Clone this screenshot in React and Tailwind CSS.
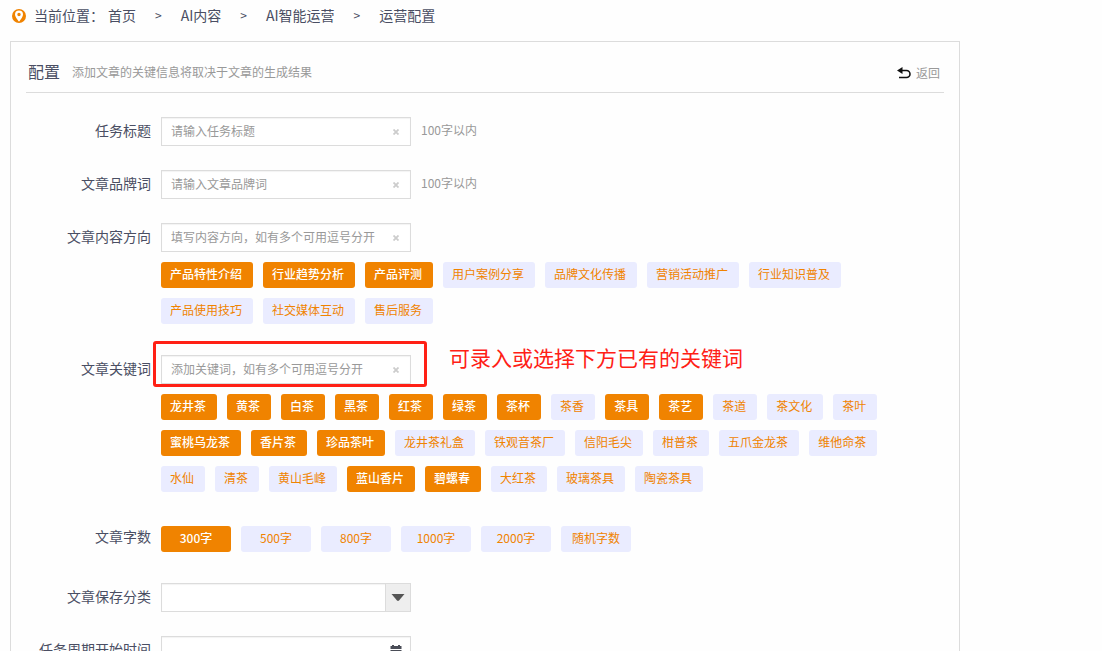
import React, { useState } from "react";
import clsx from "clsx";

const DIRECTIONS = [
  "产品特性介绍",
  "行业趋势分析",
  "产品评测",
  "用户案例分享",
  "品牌文化传播",
  "营销活动推广",
  "行业知识普及",
  "产品使用技巧",
  "社交媒体互动",
  "售后服务",
];

const KEYWORDS = [
  "龙井茶", "黄茶", "白茶", "黑茶", "红茶", "绿茶", "茶杯", "茶香", "茶具", "茶艺", "茶道", "茶文化", "茶叶",
  "蜜桃乌龙茶", "香片茶", "珍品茶叶", "龙井茶礼盒", "铁观音茶厂", "信阳毛尖", "柑普茶", "五爪金龙茶", "维他命茶",
  "水仙", "清茶", "黄山毛峰", "蓝山香片", "碧螺春", "大红茶", "玻璃茶具", "陶瓷茶具",
];

const WORD_COUNTS = ["300字", "500字", "800字", "1000字", "2000字", "随机字数"];

function PinIcon() {
  return (
    <svg width="14" height="14" viewBox="0 0 14 14" aria-hidden="true">
      <circle cx="7" cy="7" r="7" fill="#f08300" />
      <path
        fill="#fff"
        fillRule="evenodd"
        d="M7 1.500a4 4 0 0 0-4 4C3 8.300 7 12.600 7 12.600S11 8.300 11 5.500a4 4 0 0 0-4-4Zm0 2.300a1.700 1.700 0 1 1 0 3.400 1.700 1.700 0 0 1 0-3.400Z"
      />
    </svg>
  );
}

function BackIcon() {
  return (
    <svg width="14" height="12" viewBox="0 0 14 12" aria-hidden="true">
      <path d="M0 3.500 5.500 0v7Z" fill="#111" />
      <path d="M4 3.500h5.500a3.500 3.500 0 0 1 0 7H2" fill="none" stroke="#111" strokeWidth="1.600" />
    </svg>
  );
}

function CalendarIcon() {
  return (
    <svg width="12" height="13" viewBox="0 0 12 13" fill="#4a4d57" aria-hidden="true">
      <path d="M2 0h2v1h4V0h2v1h1.500v3H.5V1H2Z" />
      <path d="M.5 5h11v8H.5Z" />
    </svg>
  );
}

function Row({ id, label, className, children }) {
  return (
    <div className={clsx("flex gap-2.5", className)}>
      <label htmlFor={id} className="w-[125px] shrink-0 text-right text-sm leading-[26px]">
        {label}
      </label>
      <div className="min-w-0 flex-1">{children}</div>
    </div>
  );
}

function TextField({ id, placeholder, hint }) {
  const [value, setValue] = useState("");
  return (
    <div className="flex gap-2.5">
      <div className="relative w-[250px]">
        <input
          id={id}
          value={value}
          onChange={(e) => setValue(e.target.value)}
          placeholder={placeholder}
          className="block h-[29px] w-full border border-[#dcdcdc] bg-white pr-7 pb-0.5 pl-[9px] text-xs shadow-[inset_0_1px_1px_#0000000d] outline-none placeholder:text-[#999]"
        />
        <button
          type="button"
          aria-label="清空"
          onClick={() => setValue("")}
          className="absolute inset-y-0 right-3 flex items-center"
        >
          <svg width="6" height="6" viewBox="0 0 6 6" stroke="#ccc" strokeWidth="1.800">
            <path d="M.5.5l5 5M5.500.5l-5 5" />
          </svg>
        </button>
      </div>
      {hint && <span className="text-xs leading-[26px] text-[#999]">{hint}</span>}
    </div>
  );
}

function Chip({ active, fixed, onClick, children }) {
  return (
    <button
      type="button"
      aria-pressed={active}
      onClick={onClick}
      className={clsx(
        "h-[26px] rounded-[3px] pb-0.5 text-xs",
        fixed ? "w-[70px]" : "pr-[11px] pl-[9px]",
        active ? "bg-[#f08300] font-medium text-white" : "bg-[#eaecff] text-[#f08300]"
      )}
    >
      {children}
    </button>
  );
}

function ChipGroup({ items, initial, className }) {
  const [selected, setSelected] = useState(initial);
  const toggle = (item) =>
    setSelected((prev) =>
      prev.includes(item) ? prev.filter((i) => i !== item) : [...prev, item]
    );

  return (
    <div className={clsx("flex max-w-[740px] flex-wrap gap-2.5", className)}>
      {items.map((item) => (
        <Chip key={item} active={selected.includes(item)} onClick={() => toggle(item)}>
          {item}
        </Chip>
      ))}
    </div>
  );
}

export default function App() {
  const [count, setCount] = useState("300字");

  return (
    <div className="min-h-screen bg-[#fefefe] px-2.5 font-['Noto_Sans_CJK_SC',sans-serif] text-[#4a4e63]">
      {/* Breadcrumb */}
      <nav className="flex h-8 items-center pl-0.5 text-sm">
        <PinIcon />
        <div className="ml-2 flex items-center pb-0.5">
          <span className="mr-1">当前位置：</span>
          <div className="flex items-center gap-[19px]">
            <a href="#home">首页</a>
            <span className="text-xs">&gt;</span>
            <a href="#ai">AI内容</a>
            <span className="text-xs">&gt;</span>
            <a href="#operate">AI智能运营</a>
            <span className="text-xs">&gt;</span>
            <span>运营配置</span>
          </div>
        </div>
      </nav>

      {/* Panel */}
      <main className="mt-[9px] max-w-[950px] border border-[#dcdcdc] px-[15px] pb-6">
        <header className="flex h-[51px] items-center border-b border-[#dcdcdc] px-0.5 pt-2.5">
          <h1 className="pb-0.5 text-base">配置</h1>
          <p className="ml-3 text-xs text-[#999]">添加文章的关键信息将取决于文章的生成结果</p>
          <a href="#back" className="ml-auto flex items-center gap-[5px] pt-0.5 pr-0.5 text-xs text-[#999]">
            <BackIcon />
            返回
          </a>
        </header>

        <form className="flex flex-col gap-6 pt-6">
          <Row id="title" label="任务标题">
            <TextField id="title" placeholder="请输入任务标题" hint="100字以内" />
          </Row>

          <Row id="brand" label="文章品牌词">
            <TextField id="brand" placeholder="请输入文章品牌词" hint="100字以内" />
          </Row>

          <Row id="direction" label="文章内容方向" className="pb-[7px]">
            <TextField id="direction" placeholder="填写内容方向，如有多个可用逗号分开" />
            <ChipGroup
              className="mt-2.5"
              items={DIRECTIONS}
              initial={["产品特性介绍", "行业趋势分析", "产品评测"]}
            />
          </Row>

          <Row id="keyword" label="文章关键词" className="pb-[7px]">
            <div className="relative">
              <TextField id="keyword" placeholder="添加关键词，如有多个可用逗号分开" />
              {/* Callout */}
              <div className="pointer-events-none absolute -top-3.5 -left-2 h-[46px] w-[274px] rounded-[3px] border-3 border-[#ff2015]" />
              <p className="absolute -top-3.5 left-72 text-[21px] leading-8 text-[#ff2015]">
                可录入或选择下方已有的关键词
              </p>
            </div>
            <ChipGroup
              className="mt-2.5"
              items={KEYWORDS}
              initial={[
                "龙井茶", "黄茶", "白茶", "黑茶", "红茶", "绿茶", "茶杯", "茶具", "茶艺",
                "蜜桃乌龙茶", "香片茶", "珍品茶叶", "蓝山香片", "碧螺春",
              ]}
            />
          </Row>

          <Row label="文章字数" className="pb-[7px]">
            <div className="flex flex-wrap gap-2.5 pt-[3px]">
              {WORD_COUNTS.map((item) => (
                <Chip key={item} fixed active={item === count} onClick={() => setCount(item)}>
                  {item}
                </Chip>
              ))}
            </div>
          </Row>

          <Row id="category" label="文章保存分类">
            <div className="relative w-[250px]">
              <select
                id="category"
                className="block h-[29px] w-full appearance-none border border-[#dcdcdc] bg-white pr-8 pl-[9px] text-xs shadow-[inset_0_1px_1px_#0000000d] outline-none"
              >
                <option value=""></option>
              </select>
              <span className="pointer-events-none absolute inset-y-0 right-0 flex w-[26px] items-center justify-center border border-[#dcdcdc] bg-[#eee]">
                <svg width="14" height="7" viewBox="0 0 14 7" fill="#555" aria-hidden="true">
                  <path d="M.5 0h13L8 6.500q-1 .8-2 0Z" />
                </svg>
              </span>
            </div>
          </Row>

          <Row id="start" label="任务周期开始时间">
            <div className="relative w-[250px]">
              <input
                id="start"
                type="text"
                className="block h-[29px] w-full border border-[#dcdcdc] bg-white pr-8 pl-[9px] text-xs shadow-[inset_0_1px_1px_#0000000d] outline-none"
              />
              <span className="pointer-events-none absolute inset-y-0 right-[9px] flex items-center pt-0.5">
                <CalendarIcon />
              </span>
            </div>
          </Row>
        </form>
      </main>
    </div>
  );
}
